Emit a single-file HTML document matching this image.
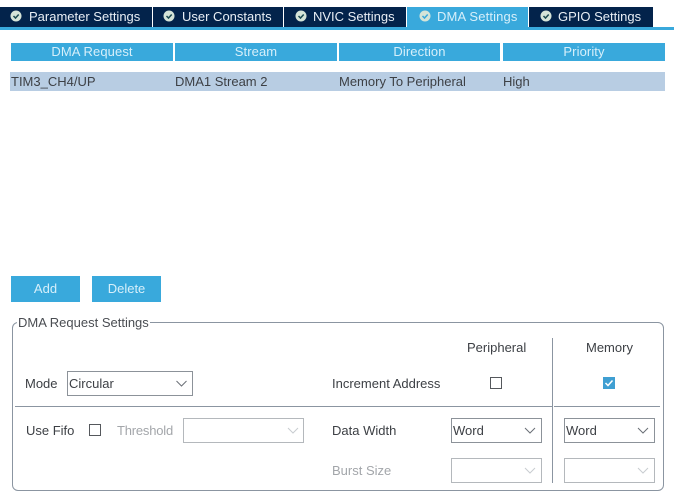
<!DOCTYPE html>
<html><head><meta charset="utf-8"><style>
html,body{margin:0;padding:0;background:#fff}
#p{position:relative;width:674px;height:493px;overflow:hidden;background:#fff;font-family:"Liberation Sans",Arial,sans-serif;font-size:13px;color:#3d4045}
#p div,#p svg{position:absolute;box-sizing:border-box}
.t{white-space:nowrap;line-height:16px}
.tab{top:7px;height:20px;background:#03234b}
.tt{top:9px;color:#e8eef5}
.h{top:43px;height:18px;background:#39a9dc;color:#d6effa;text-align:center;line-height:18px;letter-spacing:.1px}
.c{top:74px}
.b{top:276px;height:26px;width:69px;background:#39a9dc;color:#d6effa;text-align:center;line-height:26px}
.s{height:25px;background:#fff;border:1px solid #8c9299;padding-left:1px;line-height:23px}
.d{border-color:#b4b8bc}
.g{color:#a3a6aa}
.l{background:#8b95a1}
</style></head><body><div id="p">
<div style="left:0;top:27px;width:674px;height:3px;background:#39a9dc"></div>
<div class="tab" style="left:0;width:152px"></div>
<div class="tab" style="left:153px;width:130px"></div>
<div class="tab" style="left:284px;width:122px"></div>
<div class="tab" style="left:407px;width:121px;height:23px;background:#39a9dc"></div>
<div class="tab" style="left:529px;width:124px"></div>
<svg style="left:0;top:0" width="674" height="30" fill="none">
<g fill="#d5e4d8"><circle cx="16" cy="16" r="5.5"/><circle cx="169" cy="16" r="5.5"/><circle cx="301" cy="16" r="5.5"/><circle cx="425" cy="16" r="5.5"/><circle cx="546" cy="16" r="5.5"/></g>
<g stroke="#1a4a50" stroke-width="1.5"><path d="M13.5 16l2 2 3.2-3.5M166.5 16l2 2 3.2-3.5M298.500 16l2 2 3.200-3.500M543.500 16l2 2 3.200-3.500"/><path stroke="#39a9dc" d="M422.500 16l2 2 3.200-3.500"/></g>
</svg>
<div class="t tt" style="left:29px">Parameter Settings</div>
<div class="t tt" style="left:182px">User Constants</div>
<div class="t tt" style="left:313px">NVIC Settings</div>
<div class="t tt" style="left:437px;color:#d6effa;letter-spacing:.15px">DMA Settings</div>
<div class="t tt" style="left:558px">GPIO Settings</div>
<div class="h" style="left:11px;width:162px">DMA Request</div>
<div class="h" style="left:175px;width:162px">Stream</div>
<div class="h" style="left:339px;width:161px">Direction</div>
<div class="h" style="left:503px;width:162px">Priority</div>
<div style="left:10px;top:72px;width:655px;height:19px;background:#b8cde3"></div>
<div class="t c" style="left:11px">TIM3_CH4/UP</div>
<div class="t c" style="left:175px">DMA1 Stream 2</div>
<div class="t c" style="left:339px">Memory To Peripheral</div>
<div class="t c" style="left:503px">High</div>
<div class="b" style="left:11px">Add</div>
<div class="b" style="left:92px">Delete</div>
<div style="left:12px;top:322px;width:652px;height:169px;border:1px solid #8b95a1;border-radius:6px"></div>
<div class="t" style="left:17px;top:315px;background:#fff;padding:0 1px;color:#4a4d52">DMA Request Settings</div>
<div class="l" style="left:15px;top:406px;width:537px;height:1px"></div>
<div class="l" style="left:554px;top:406px;width:106px;height:1px"></div>
<div class="l" style="left:552px;top:338px;width:1px;height:145px"></div>
<div class="t" style="left:467px;top:340px">Peripheral</div>
<div class="t" style="left:586px;top:340px">Memory</div>
<div class="t" style="left:25px;top:376px">Mode</div>
<div class="s" style="left:67px;top:371px;width:126px">Circular</div>
<div class="t" style="left:332px;top:376px">Increment Address</div>
<div style="left:490px;top:377px;width:12px;height:12px;border:1px solid #55585c"></div>
<div style="left:603px;top:377px;width:12px;height:12px;background:#3f9fd2"></div>
<div class="t" style="left:26px;top:423px">Use Fifo</div>
<div style="left:89px;top:424px;width:12px;height:12px;border:1px solid #55585c"></div>
<div class="t g" style="left:117px;top:423px;letter-spacing:-.2px">Threshold</div>
<div class="s d" style="left:183px;top:418px;width:121px"></div>
<div class="t" style="left:332px;top:423px">Data Width</div>
<div class="s" style="left:451px;top:418px;width:91px">Word</div>
<div class="s" style="left:564px;top:418px;width:91px">Word</div>
<div class="t g" style="left:332px;top:463px">Burst Size</div>
<div class="s d" style="left:451px;top:458px;width:91px"></div>
<div class="s d" style="left:564px;top:458px;width:91px"></div>
<svg style="left:0;top:0" width="674" height="493" fill="none">
<path d="M176.500 381l5 5 5-5M525 428l5 5 5-5M638 428l5 5 5-5" stroke="#6a6f76"/>
<path d="M288 428l5 5 5-5M525 468l5 5 5-5M638 468l5 5 5-5" stroke="#c8ccd0"/>
<path d="M605.500 383l2.500 2.500 4.500-5" stroke="#fff" stroke-width="1.500"/>
</svg>
</div></body></html>
